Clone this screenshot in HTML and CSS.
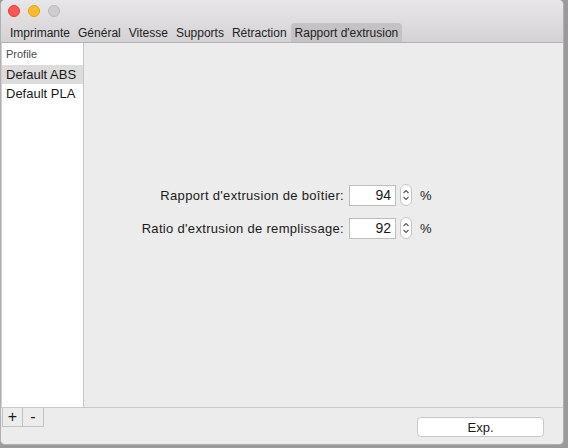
FILE: index.html
```html
<!DOCTYPE html>
<html>
<head>
<meta charset="utf-8">
<link rel="stylesheet" href="styles.css">
</head>
<body>
<div class="window">
  <div class="titlebar">
    <div class="lights">
      <span class="dot red"></span>
      <span class="dot yellow"></span>
      <span class="dot grey"></span>
    </div>
    <div class="tabs">
      <span class="tab">Imprimante</span>
      <span class="tab">Général</span>
      <span class="tab">Vitesse</span>
      <span class="tab">Supports</span>
      <span class="tab">Rétraction</span>
      <span class="tab active">Rapport d'extrusion</span>
    </div>
  </div>
  <div class="main">
    <div class="sidebar">
      <div class="side-header">Profile</div>
      <div class="side-row selected">Default ABS</div>
      <div class="side-row">Default PLA</div>
    </div>
    <div class="panel">
      <div class="form">
        <label class="lbl">Rapport d'extrusion de boîtier:</label>
        <div class="field">
          <div class="input">94</div>
          <div class="stepper"><svg width="8" height="16" viewBox="0 0 8 16"><path d="M1.5 6 L4 3.5 L6.5 6 M1.5 10 L4 12.5 L6.5 10" fill="none" stroke="#555" stroke-width="1.1"/></svg></div>
          <span class="unit">%</span>
        </div>
        <label class="lbl">Ratio d'extrusion de remplissage:</label>
        <div class="field">
          <div class="input">92</div>
          <div class="stepper"><svg width="8" height="16" viewBox="0 0 8 16"><path d="M1.5 6 L4 3.5 L6.5 6 M1.5 10 L4 12.5 L6.5 10" fill="none" stroke="#555" stroke-width="1.1"/></svg></div>
          <span class="unit">%</span>
        </div>
      </div>
    </div>
  </div>
  <div class="bottombar">
    <div class="pm">
      <span class="pmbtn">+</span>
      <span class="pmbtn">-</span>
    </div>
    <div class="exp">Exp.</div>
  </div>
</div>
</body>
</html>
```
FILE: styles.css
```css
* { box-sizing: border-box; }
html, body { margin: 0; padding: 0; }
body {
  background: #9a9a9a;
  width: 568px;
  height: 448px;
  font-family: "Liberation Sans", Arial, sans-serif;
  color: #1a1a1a;
  overflow: hidden;
}
.window {
  width: 564px;
  height: 445px;
  background: #ececec;
  border-radius: 5px;
  overflow: hidden;
  display: flex;
  flex-direction: column;
  border: 1px solid #b0b0b0;
  border-top: none;
}
.titlebar {
  height: 43px;
  background: linear-gradient(#e8e6e8, #d4d2d4);
  border-bottom: 1px solid #b2b2b2;
  display: flex;
  flex-direction: column;
}
.lights {
  height: 22px;
  display: flex;
  align-items: center;
  gap: 8px;
  padding-left: 7px;
}
.dot { width: 12px; height: 12px; border-radius: 50%; display: block; }
.red { background: #fc5753; border: 0.5px solid #df3d39; }
.yellow { background: #fdbc2e; border: 0.5px solid #de9f1c; }
.grey { background: #cecccd; border: 0.5px solid #b9b7b8; }
.tabs {
  height: 20px;
  display: flex;
  align-items: stretch;
  padding-left: 5px;
  font-size: 12px;
  color: #222;
}
.tab {
  padding: 0 4px;
  display: flex;
  align-items: center;
  border-radius: 4px 4px 0 0;
  margin-top: 1px;
}
.tab.active { background: #c4c2c4; }
.main {
  flex: 1;
  display: flex;
  border-bottom: 1px solid #cbcbcb;
}
.sidebar {
  width: 83px;
  background: #fff;
  border-left: 1px solid #cfcfcf;
  border-right: 1px solid #c6c6c6;
}
.side-header {
  height: 22px;
  font-size: 11px;
  color: #4a4a4a;
  padding-left: 4px;
  display: flex;
  align-items: center;
}
.side-row {
  height: 19px;
  font-size: 13px;
  padding-left: 4px;
  display: flex;
  align-items: center;
}
.side-row.selected { background: #dcdcdc; }
.panel {
  flex: 1;
  padding-top: 141px;
  padding-left: 38px;
}
.form {
  display: grid;
  grid-template-columns: 222px auto;
  column-gap: 5px;
  row-gap: 11px;
  font-size: 13px;
}
.lbl {
  text-align: right;
  display: flex;
  align-items: center;
  justify-content: flex-end;
  height: 22px;
  color: #1a1a1a;
  letter-spacing: 0.32px;
}
.field { display: flex; align-items: center; height: 22px; }
.input {
  width: 47px;
  height: 21px;
  background: #fff;
  border: 1px solid #bdbdbd;
  text-align: right;
  padding-right: 4px;
  line-height: 19px;
  font-size: 14px;
}
.stepper {
  margin-left: 4px;
  width: 12px;
  height: 22px;
  background: #fff;
  border: 1px solid #c4c4c4;
  border-radius: 6px;
  display: flex;
  align-items: center;
  justify-content: center;
}
.unit { margin-left: 8px; }
.bottombar {
  height: 36px;
  display: flex;
  align-items: flex-start;
}
.pm { display: flex; margin-left: 1px; }
.pmbtn {
  width: 21px;
  height: 19px;
  border: 1px solid #c2c2c2;
  border-top: none;
  display: flex;
  align-items: center;
  justify-content: center;
  font-size: 16px;
  background: #ececec;
}
.pmbtn + .pmbtn { border-left: none; }
.exp {
  margin-left: auto;
  margin-right: 19px;
  margin-top: 9px;
  width: 127px;
  height: 20px;
  background: #fff;
  border: 1px solid #c8c8c8;
  border-radius: 4px;
  font-size: 13px;
  display: flex;
  align-items: center;
  justify-content: center;
}
```
